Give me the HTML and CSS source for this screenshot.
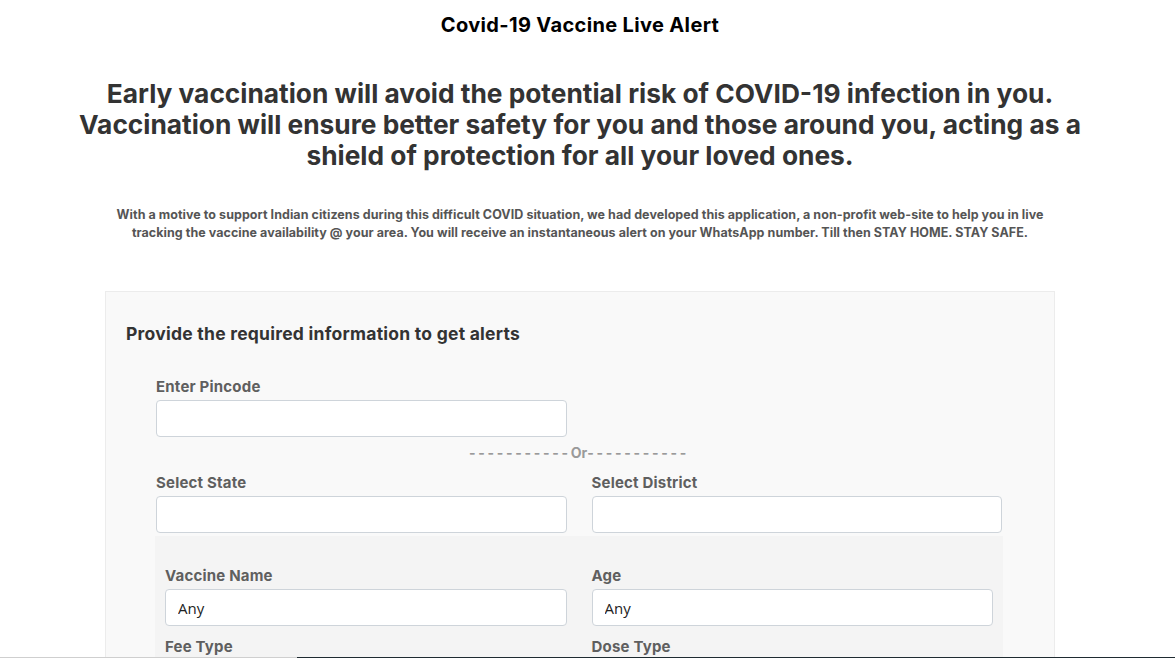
FILE: index.html
```html
<!DOCTYPE html>
<html lang="en">
<head>
<meta charset="utf-8">
<title>Covid-19 Vaccine Live Alert</title>
<link rel="stylesheet" href="styles.css">
</head>
<body>
<div class="page">
  <h1 class="title">Covid-19 Vaccine Live Alert</h1>
  <h2 class="hero">Early vaccination will avoid the potential risk of COVID-19 infection in you.<br>Vaccination will ensure better safety for you and those around you, acting as a shield of protection for all your loved ones.</h2>
  <p class="intro">With a motive to support Indian citizens during this difficult COVID situation, we had developed this application, a non-profit web-site to help you in live tracking the vaccine availability @ your area. You will receive an instantaneous alert on your WhatsApp number. Till then STAY HOME. STAY SAFE.</p>
  <section class="card">
    <h3 class="card-title">Provide the required information to get alerts</h3>
    <form class="form">
      <div class="row">
        <div class="field">
          <label class="label">Enter Pincode</label>
          <input class="input" type="text">
        </div>
        <div class="field"></div>
      </div>
      <div class="or"><span class="dashes">-----------</span>Or<span class="dashes">-----------</span></div>
      <div class="row">
        <div class="field">
          <label class="label">Select State</label>
          <input class="input" type="text">
        </div>
        <div class="field">
          <label class="label">Select District</label>
          <input class="input" type="text">
        </div>
      </div>
      <div class="filters">
        <div class="row">
          <div class="field">
            <label class="label">Vaccine Name</label>
            <input class="input" type="text" value="Any">
          </div>
          <div class="field">
            <label class="label">Age</label>
            <input class="input" type="text" value="Any">
          </div>
        </div>
        <div class="row">
          <div class="field">
            <label class="label">Fee Type</label>
            <input class="input" type="text" value="Any">
          </div>
          <div class="field">
            <label class="label">Dose Type</label>
            <input class="input" type="text" value="Any">
          </div>
        </div>
      </div>
    </form>
  </section>
</div>
<div class="bottom-edge"><span class="edge-light"></span><span class="edge-dark"></span></div>
</body>
</html>
```

FILE: styles.css
```css
* { box-sizing: border-box; }
html, body { margin: 0; padding: 0; background: #fff; }
body { font-family: Inter, "Open Sans", sans-serif; color: #333; }
.page { width: 1160px; }
.title {
  margin: 13px 0 0;
  text-align: center;
  font-size: 20px;
  line-height: 24px;
  letter-spacing: 0.35px;
  font-weight: 700;
  color: #000;
}
.hero {
  margin: 41px auto 0;
  width: 1060px;
  text-align: center;
  font-size: 26.3px;
  line-height: 31px;
  font-weight: 700;
  color: #333;
}
.intro {
  margin: 35px auto 0;
  width: 950px;
  text-align: center;
  font-size: 12.5px;
  line-height: 18px;
  letter-spacing: 0.05px;
  font-weight: 700;
  color: #555;
}
.card {
  width: 950px;
  margin: 49px auto 0;
  padding: 30px 20px 20px;
  background: #f9f9f9;
  border: 1px solid #ececec;
}
.card-title {
  margin: 0;
  font-size: 17.5px;
  line-height: 24px;
  letter-spacing: 0.25px;
  font-weight: 700;
  color: #333;
}
.form { margin: 31px 32px 0 30px; }
.row { display: flex; gap: 25px; }
.field { flex: 1; display: flex; flex-direction: column; min-width: 0; }
.label {
  font-size: 15px;
  line-height: 20px;
  letter-spacing: 0.2px;
  font-weight: 700;
  color: #5f5f5f;
  margin-bottom: 3px;
}
.input {
  height: 37px;
  border: 1px solid #ced4da;
  border-radius: 4px;
  background: #fff;
  padding: 0 12px;
  font-family: "Open Sans", sans-serif;
  font-size: 15px;
  color: #222;
}
.or {
  text-align: center;
  font-size: 14px;
  line-height: 20px;
  font-weight: 700;
  color: #9a9a9a;
  margin: 6px 0 10px;
}
.dashes { letter-spacing: 2.7px; }
.filters {
  margin: 3px -1px 0;
  padding: 30px 10px 10px;
  background: #f4f4f4;
  display: flex;
  flex-direction: column;
  gap: 11px;
}
.bottom-edge {
  position: fixed;
  left: 0; right: 0; bottom: 0;
  height: 1px;
  display: flex;
}
.edge-light { width: 297px; background: #cfcfcf; }
.edge-dark { flex: 1; background: #1f2b31; }
```
